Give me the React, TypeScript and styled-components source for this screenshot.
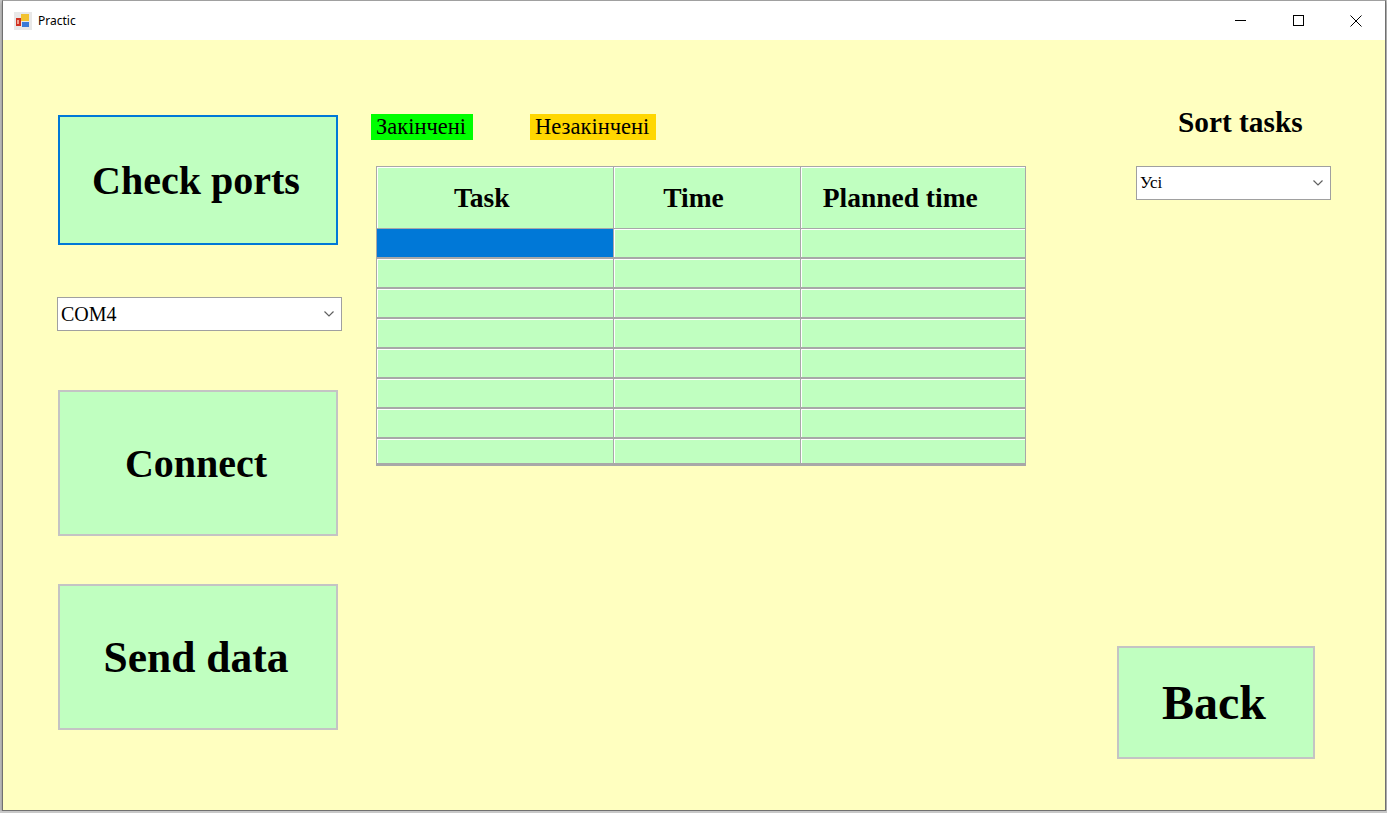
import React, { useState } from "react";
import styled, { createGlobalStyle } from "styled-components";

const GlobalStyle = createGlobalStyle`
    html, body {
        margin: 0;
        padding: 0;
        background: #c8c8c8;
        overflow: hidden;
    }
    * {
        box-sizing: border-box;
    }
`;

const rows = 8;

function AppIcon() {
    return (
        <svg width="18" height="18" viewBox="0 0 18 18">
            <rect x="0" y="0" width="18" height="18" fill="#e8e8e8" />
            <rect x="2" y="6" width="5" height="8" fill="#d03020" />
            <rect x="3" y="8" width="2" height="4" fill="#f0a090" />
            <rect x="7" y="2" width="8" height="7" fill="#f2c230" />
            <rect x="8" y="10" width="7" height="5" fill="#3a7ad8" />
        </svg>
    );
}

function ChevronDown() {
    return (
        <svg width="12" height="8" viewBox="0 0 12 8">
            <path d="M1.5 1.5 L6 6 L10.5 1.5" stroke="#606060" strokeWidth="1.2" fill="none" />
        </svg>
    );
}

function App() {
    const [port] = useState("COM4");
    const [sortBy] = useState("Усі");

    return (
        <>
            <GlobalStyle />
            <Window>
                <TitleBar>
                    <AppIcon />
                    <TitleText>{"Practic"}</TitleText>
                    <Controls>
                        <ControlButton>
                            <svg width="11" height="11" viewBox="0 0 11 11">
                                <path d="M0 5.5 H11" stroke="#000" strokeWidth="1" />
                            </svg>
                        </ControlButton>
                        <ControlButton>
                            <svg width="11" height="11" viewBox="0 0 11 11">
                                <rect x="0.5" y="0.5" width="10" height="10" stroke="#000" strokeWidth="1" fill="none" />
                            </svg>
                        </ControlButton>
                        <ControlButton>
                            <svg width="12" height="12" viewBox="0 0 12 12">
                                <path d="M0.5 0.5 L11.5 11.5 M11.5 0.5 L0.5 11.5" stroke="#000" strokeWidth="1" />
                            </svg>
                        </ControlButton>
                    </Controls>
                </TitleBar>
                <Client>
                    <LeftColumn>
                        <BigButton $focused $height={130} $size={40}>{"Check ports"}</BigButton>
                        <Combo $width={285} $top={52} $size={20}>
                            <span>{port}</span>
                            <ChevronDown />
                        </Combo>
                        <BigButton $height={146} $size={40} $top={59}>{"Connect"}</BigButton>
                        <BigButton $height={146} $size={43.5} $top={48}>{"Send data"}</BigButton>
                    </LeftColumn>
                    <MiddleColumn>
                        <Legend>
                            <LegendLabel $color={"#00ff00"}>{"Закінчені"}</LegendLabel>
                            <LegendLabel $color={"#ffd700"}>{"Незакінчені"}</LegendLabel>
                        </Legend>
                        <GridFrame>
                            <Grid>
                                <colgroup>
                                    <col style={{width: 236}} />
                                    <col style={{width: 187}} />
                                    <col style={{width: 226}} />
                                </colgroup>
                                <thead>
                                    <tr>
                                        <HeaderCell>{"Task"}</HeaderCell>
                                        <HeaderCell>{"Time"}</HeaderCell>
                                        <HeaderCell>{"Planned time"}</HeaderCell>
                                    </tr>
                                </thead>
                                <tbody>
                                    {Array.from({length: rows}).map((_, i) =>
                                        <tr key={i}>
                                            <Cell $selected={i === 0} />
                                            <Cell />
                                            <Cell />
                                        </tr>)}
                                </tbody>
                            </Grid>
                        </GridFrame>
                    </MiddleColumn>
                    <RightColumn>
                        <SortTitle>{"Sort tasks"}</SortTitle>
                        <Combo $width={195} $top={27} $size={17} $left={19}>
                            <span>{sortBy}</span>
                            <ChevronDown />
                        </Combo>
                        <BackButton>{"Back"}</BackButton>
                    </RightColumn>
                </Client>
            </Window>
        </>
    );
}

/**
 * Styled Components
 */
const Window = styled("div")`
    margin-left: 2px;
    width: 1384px;
    height: 811px;
    border: 1px solid #707070;
    border-top-color: #a0a0a0;
    background: #ffffc0;
    display: flex;
    flex-direction: column;
    box-shadow: 0 2px 4px rgba(0, 0, 0, 0.35);
`;

const TitleBar = styled("div")`
    height: 39px;
    background: #ffffff;
    display: flex;
    flex-direction: row;
    align-items: center;
    padding-left: 11px;
    flex-shrink: 0;
`;

const TitleText = styled("span")`
    font-family: "Noto Sans", "Open Sans", sans-serif;
    font-size: 12px;
    color: #000;
    margin-left: 6px;
    margin-top: -1px;
`;

const Controls = styled("div")`
    margin-left: auto;
    display: flex;
    flex-direction: row;
    height: 100%;
`;

const ControlButton = styled("div")`
    width: 58px;
    height: 100%;
    display: flex;
    align-items: center;
    justify-content: center;
`;

const Client = styled("div")`
    flex-grow: 1;
    display: flex;
    flex-direction: row;
    padding-left: 54px;
    font-family: "Liberation Serif", "Times New Roman", serif;
`;

const LeftColumn = styled("div")`
    width: 285px;
    padding-top: 75px;
    display: flex;
    flex-direction: column;
`;

const BigButton = styled("div")<{$height: number; $size: number; $top?: number; $focused?: boolean}>`
    width: 280px;
    height: ${p => p.$height}px;
    margin-left: 1px;
    margin-top: ${p => p.$top || 0}px;
    padding-right: 4px;
    background: #c0ffc0;
    border: 2px solid ${p => p.$focused ? "#0078d7" : "#c4c4c4"};
    display: flex;
    align-items: center;
    justify-content: center;
    font-weight: bold;
    font-size: ${p => p.$size}px;
    color: #000;
`;

const Combo = styled("div")<{$width: number; $top: number; $size: number; $left?: number}>`
    width: ${p => p.$width}px;
    height: 34px;
    margin-top: ${p => p.$top}px;
    margin-left: ${p => p.$left || 0}px;
    background: #ffffff;
    border: 1px solid #a0a0a0;
    display: flex;
    flex-direction: row;
    align-items: center;
    justify-content: space-between;
    padding: 0 6px 0 3px;
    font-size: ${p => p.$size}px;
    color: #000;
`;

const MiddleColumn = styled("div")`
    margin-left: 29px;
    width: 655px;
    padding-top: 74px;
    display: flex;
    flex-direction: column;
`;

const Legend = styled("div")`
    display: flex;
    flex-direction: row;
    gap: 57px;
`;

const LegendLabel = styled("div")<{$color: string}>`
    background: ${p => p.$color};
    height: 26px;
    padding: 0 7px 0 5px;
    display: flex;
    align-items: center;
    font-size: 22.5px;
    color: #000;
`;

const GridFrame = styled("div")`
    margin-top: 26px;
    margin-left: 5px;
    width: 650px;
    height: 300px;
    overflow: hidden;
    border: 1px solid #a8a8a8;
    position: relative;
    &::after {
        content: "";
        position: absolute;
        left: 0;
        right: 0;
        bottom: 0;
        height: 2px;
        background: #a8a8a8;
    }
`;

const Grid = styled("table")`
    border-collapse: collapse;
    table-layout: fixed;
    width: 649px;
`;

const HeaderCell = styled("th")`
    height: 61px;
    background: #c0ffc0;
    font-weight: bold;
    font-size: 27.5px;
    text-align: center;
    padding: 2px 26px 0 0;
    border-right: 1px solid #a8a8a8;
    border-bottom: 1px solid #a8a8a8;
    box-shadow: inset 1px 1px 0 #ffffff;
    &:last-child {
        border-right: none;
    }
`;

const Cell = styled("td")<{$selected?: boolean}>`
    height: 30px;
    padding: 0;
    background: ${p => p.$selected ? "#0078d7" : "#c0ffc0"};
    border-right: 1px solid #a8a8a8;
    border-bottom: 2px solid #a8a8a8;
    box-shadow: inset 1px 1px 0 ${p => p.$selected ? "#0078d7" : "#ffffff"};
    &:last-child {
        border-right: none;
    }
`;

const RightColumn = styled("div")`
    margin-left: 91px;
    width: 214px;
    padding-top: 66px;
    padding-bottom: 51px;
    display: flex;
    flex-direction: column;
`;

const SortTitle = styled("div")`
    font-weight: bold;
    font-size: 29.33px;
    margin-left: 61px;
    color: #000;
`;

const BackButton = styled("div")`
    margin-top: auto;
    width: 198px;
    height: 113px;
    padding-right: 4px;
    background: #c0ffc0;
    border: 2px solid #c4c4c4;
    display: flex;
    align-items: center;
    justify-content: center;
    font-weight: bold;
    font-size: 48px;
    color: #000;
`;

export default App;
